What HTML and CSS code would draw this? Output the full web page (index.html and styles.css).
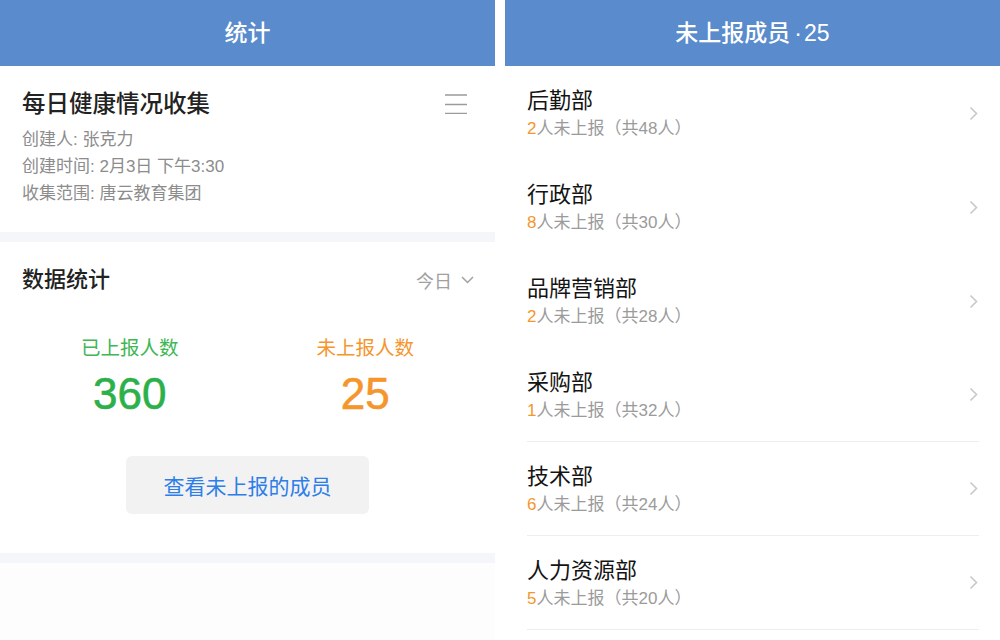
FILE: index.html
```html
<!DOCTYPE html>
<html>
  <head>
    <meta name="viewport" content="width=device-width, initial-scale=1.0">
    <title>统计</title>
    <link rel="stylesheet" href="styles.css">
  </head>
  <body>
    <div class="screens">
      <!-- 统计页 -->
      <div class="panel">
        <div class="nav-bar">统计</div>

        <div class="task-card">
          <div class="task-top">
            <p class="task-title">每日健康情况收集</p>
            <svg class="menu-icon" width="22" height="22" viewBox="0 0 22 22">
              <path d="M0 3h22M0 12.5h22M0 21.5h22" stroke="#9b9b9b" stroke-width="1.6" fill="none" />
            </svg>
          </div>
          <p class="task-info">创建人: 张克力</p>
          <p class="task-info">创建时间: 2月3日 下午3:30</p>
          <p class="task-info">收集范围: 唐云教育集团</p>
        </div>

        <div class="stats-card">
          <div class="stats-head">
            <p class="stats-title">数据统计</p>
            <div class="date-picker">
              今日
              <svg width="13" height="8" viewBox="0 0 13 8">
                <path d="M1 1l5.5 5.5L12 1" stroke="#a0a0a0" stroke-width="1.5" fill="none" />
              </svg>
            </div>
          </div>

          <div class="stats-grid">
            <div class="stat done">
              <p class="stat-label">已上报人数</p>
              <p class="stat-num">360</p>
            </div>
            <div class="stat todo">
              <p class="stat-label">未上报人数</p>
              <p class="stat-num">25</p>
            </div>
          </div>

          <button class="view-button">查看未上报的成员</button>
        </div>

        <div class="panel-rest"></div>
      </div>

      <!-- 未上报成员页 -->
      <div class="panel">
        <div class="nav-bar">未上报成员<span class="dot">·</span>25</div>

        <div class="dept-list">
          <div class="dept-row">
            <div>
              <p class="dept-name">后勤部</p>
              <p class="dept-sub"><span class="js-count">2</span>人未上报（共48人）</p>
            </div>
            <svg class="arrow" width="9" height="15" viewBox="0 0 9 15"><path d="M1.5 1.5l6 6-6 6" stroke="#c8c8c8" stroke-width="1.6" fill="none" /></svg>
          </div>
          <div class="dept-row">
            <div>
              <p class="dept-name">行政部</p>
              <p class="dept-sub"><span class="js-count">8</span>人未上报（共30人）</p>
            </div>
            <svg class="arrow" width="9" height="15" viewBox="0 0 9 15"><path d="M1.5 1.5l6 6-6 6" stroke="#c8c8c8" stroke-width="1.6" fill="none" /></svg>
          </div>
          <div class="dept-row">
            <div>
              <p class="dept-name">品牌营销部</p>
              <p class="dept-sub"><span class="js-count">2</span>人未上报（共28人）</p>
            </div>
            <svg class="arrow" width="9" height="15" viewBox="0 0 9 15"><path d="M1.5 1.5l6 6-6 6" stroke="#c8c8c8" stroke-width="1.6" fill="none" /></svg>
          </div>
          <div class="dept-row lined">
            <div>
              <p class="dept-name">采购部</p>
              <p class="dept-sub"><span class="js-count">1</span>人未上报（共32人）</p>
            </div>
            <svg class="arrow" width="9" height="15" viewBox="0 0 9 15"><path d="M1.5 1.5l6 6-6 6" stroke="#c8c8c8" stroke-width="1.6" fill="none" /></svg>
          </div>
          <div class="dept-row lined">
            <div>
              <p class="dept-name">技术部</p>
              <p class="dept-sub"><span class="js-count">6</span>人未上报（共24人）</p>
            </div>
            <svg class="arrow" width="9" height="15" viewBox="0 0 9 15"><path d="M1.5 1.5l6 6-6 6" stroke="#c8c8c8" stroke-width="1.6" fill="none" /></svg>
          </div>
          <div class="dept-row lined">
            <div>
              <p class="dept-name">人力资源部</p>
              <p class="dept-sub"><span class="js-count">5</span>人未上报（共20人）</p>
            </div>
            <svg class="arrow" width="9" height="15" viewBox="0 0 9 15"><path d="M1.5 1.5l6 6-6 6" stroke="#c8c8c8" stroke-width="1.6" fill="none" /></svg>
          </div>
        </div>
      </div>
    </div>
  </body>
</html>
```

FILE: styles.css
```css
body {
  margin: 0;
  background-color: white;
  font-family: "Liberation Sans", "Noto Sans CJK SC", sans-serif;
}
p {
  margin: 0;
}
.screens {
  display: flex;
  gap: 10px;
  height: 640px;
  overflow: hidden;
}
.panel {
  width: 495px;
  display: flex;
  flex-direction: column;
}
.nav-bar {
  height: 66px;
  line-height: 66px;
  background-color: rgb(90, 139, 204);
  color: white;
  font-size: 23px;
  font-weight: 500;
  text-align: center;
}
.dot {
  margin: 0 2px 0 4px;
}

/* task */
.task-card {
  padding: 23px 22px 25px 22px;
  border-bottom: 10px solid rgb(245, 246, 250);
}
.task-top {
  display: flex;
  justify-content: space-between;
  align-items: center;
}
.task-title {
  font-size: 23.5px;
  line-height: 30px;
  font-weight: 500;
  color: rgb(34, 34, 34);
}
.menu-icon {
  margin-right: 6px;
  margin-top: -2px;
}
.task-info {
  font-size: 17px;
  line-height: 27px;
  color: rgb(140, 140, 140);
}
.task-info:first-of-type {
  margin-top: 7px;
}

/* stats */
.stats-card {
  padding: 24px 0 39px 0;
  border-bottom: 10px solid rgb(245, 246, 250);
  display: flex;
  flex-direction: column;
  align-items: center;
}
.stats-head {
  align-self: stretch;
  display: flex;
  justify-content: space-between;
  align-items: center;
  padding: 0 21px 0 22px;
}
.stats-title {
  font-size: 22px;
  line-height: 28px;
  font-weight: 500;
  color: rgb(34, 34, 34);
}
.date-picker {
  display: flex;
  align-items: center;
  gap: 9px;
  font-size: 18px;
  color: rgb(160, 160, 160);
}
.stats-grid {
  align-self: stretch;
  display: grid;
  grid-template-columns: 1fr 1fr;
  padding: 0 12px;
  margin-top: 41px;
  text-align: center;
}
.stat-label {
  font-size: 19.5px;
  line-height: 26px;
}
.stat-num {
  margin-top: 10px;
  font-size: 44px;
  line-height: 46px;
  -webkit-text-stroke: 0.6px currentColor;
}
.done .stat-label {
  color: rgb(64, 182, 84);
}
.done .stat-num {
  color: rgb(44, 176, 74);
}
.todo .stat-label,
.todo .stat-num {
  color: rgb(245, 150, 44);
}
.view-button {
  margin-top: 39px;
  width: 243px;
  height: 58px;
  border: none;
  border-radius: 6px;
  background-color: rgb(242, 242, 242);
  color: rgb(45, 126, 232);
  font-size: 21px;
  font-family: "Liberation Sans", "Noto Sans CJK SC", sans-serif;
  cursor: pointer;
}
.panel-rest {
  flex: 1;
  background-color: rgb(253, 253, 253);
}

/* department list */
.dept-list {
  padding: 0 21px 0 22px;
}
.dept-row {
  height: 94px;
  padding-top: 4px;
  box-sizing: border-box;
  display: flex;
  justify-content: space-between;
  align-items: center;
}
.dept-row.lined {
  border-bottom: 1px solid rgb(238, 238, 238);
}
.dept-name {
  font-size: 22px;
  line-height: 28px;
  color: rgb(20, 20, 20);
}
.dept-sub {
  font-size: 17px;
  line-height: 28px;
  color: rgb(155, 155, 155);
}
.js-count {
  color: rgb(245, 150, 44);
}
.arrow {
  margin-right: 1px;
  margin-top: -4px;
}
```
